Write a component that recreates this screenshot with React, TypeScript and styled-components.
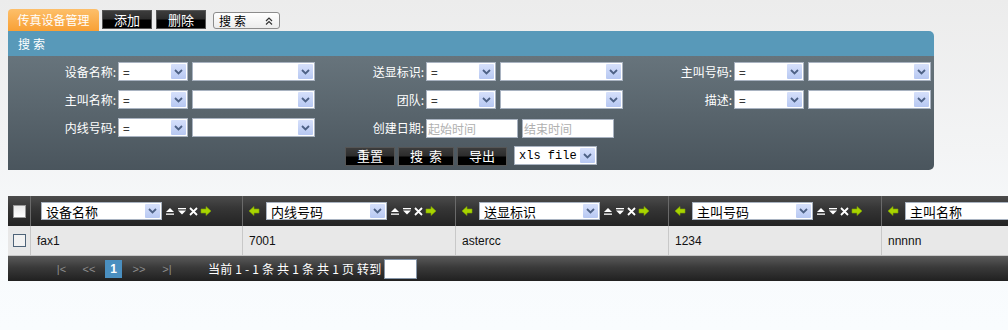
import React from "react";
import styled, { createGlobalStyle } from "styled-components";

const Global = createGlobalStyle`
  html, body { margin: 0; padding: 0; }
  body { font-family: "Liberation Sans", Arial, "Noto Sans CJK SC", sans-serif; font-size: 12px; }
`;

const Page = styled.div`
  width: 1008px;
  height: 330px;
  overflow: hidden;
  background: linear-gradient(#ececec 0px, #f3f4f5 150px, #f8fbfd 260px, #f9fcfe 330px);
  padding-top: 9px;
  box-sizing: border-box;
`;

const TopBar = styled.div`
  display: flex;
  align-items: flex-start;
  margin-left: 8px;
  height: 22px;
`;

const Tab = styled.div`
  width: 91px;
  height: 22px;
  box-sizing: border-box;
  border-radius: 4px 4px 0 0;
  background: linear-gradient(#fdbf6a, #f8a035);
  color: #fff;
  font-family: "Noto Sans CJK SC", sans-serif;
  font-size: 12px;
  line-height: 21px;
  text-align: center;
  margin-right: 3px;
`;

const BlackButton = styled.button<{ $w: number; $spaced?: boolean }>`
  width: ${(p) => p.$w}px;
  height: 19px;
  margin: 1px 0 0;
  padding: 0;
  border: 1px solid #555;
  background: linear-gradient(#3c3c3c 0%, #2c2c2c 48%, #000 52%, #000 100%);
  color: #fff;
  font-family: "Noto Sans CJK SC", sans-serif;
  font-size: 13px;
  line-height: 16px;
  letter-spacing: ${(p) => (p.$spaced ? "6px" : "0")};
  text-indent: ${(p) => (p.$spaced ? "6px" : "0")};
  box-sizing: border-box;
  cursor: pointer;
  flex: none;
`;

const Spacer = styled.div<{ $w: number }>`
  width: ${(p) => p.$w}px;
  flex: none;
`;

const ModeSelect = styled.div`
  margin-top: 3px;
  width: 67px;
  height: 17px;
  box-sizing: border-box;
  border: 1px solid #8c8c8c;
  border-radius: 3px;
  background: linear-gradient(#fff, #ececec);
  display: flex;
  align-items: center;
  justify-content: space-between;
  padding: 0 6px 0 5px;
  font-family: "Noto Sans CJK SC", sans-serif;
  font-size: 12px;
  color: #000;
  letter-spacing: 3px;
`;

const Panel = styled.div`
  margin-left: 8px;
  width: 926px;
  border-radius: 0 5px 5px 0;
  overflow: hidden;
`;

const PanelHead = styled.div`
  height: 25px;
  background: #5899b9;
  color: #fff;
  font-family: "Noto Sans CJK SC", sans-serif;
  font-size: 12px;
  line-height: 25px;
  padding-left: 10px;
  letter-spacing: 3px;
`;

const PanelBody = styled.div`
  background: linear-gradient(#67747c, #4a555d);
  padding: 6px 0 6px;
  height: 114px;
  box-sizing: border-box;
  display: flex;
  flex-direction: column;
  gap: 9px;
`;

const FilterRow = styled.div`
  display: flex;
  height: 19px;
`;

const Group = styled.div`
  width: 308px;
  flex: none;
  display: flex;
  align-items: center;
`;

const Label = styled.div`
  width: 108px;
  flex: none;
  margin-right: 2px;
  text-align: right;
  color: #fff;
  font-family: "Noto Sans CJK SC", sans-serif;
  font-size: 12px;
  white-space: nowrap;
`;

const FakeSelect = styled.div<{ $w: number; $h?: number; $mono?: boolean; $size?: number; $gap?: number }>`
  width: ${(p) => p.$w}px;
  height: ${(p) => p.$h ?? 19}px;
  box-sizing: border-box;
  border: 1px solid #a9b3c1;
  background: #fff;
  display: flex;
  align-items: stretch;
  margin-right: ${(p) => p.$gap ?? 4}px;
  font-family: ${(p) =>
    p.$mono ? '"Liberation Mono", "DejaVu Sans Mono", monospace' : '"Noto Sans CJK SC", sans-serif'};
  font-size: ${(p) => p.$size ?? 12}px;
  color: #000;
  flex: none;
`;

const SelectValue = styled.div`
  flex: 1;
  padding-left: 4px;
  display: flex;
  align-items: center;
  overflow: hidden;
  white-space: nowrap;
`;

const DropBtn = styled.div`
  width: 15px;
  flex: none;
  margin: 1px;
  background: linear-gradient(#d6e0fb, #b7c8f2);
  border-radius: 1px;
  display: flex;
  align-items: center;
  justify-content: center;
`;

const DateInput = styled.div`
  width: 92px;
  height: 19px;
  flex: none;
  box-sizing: border-box;
  border: 1px solid #a9b3c1;
  background: #fff;
  color: #b0b0b0;
  font-family: "Noto Sans CJK SC", sans-serif;
  font-size: 12px;
  line-height: 17px;
  padding-left: 1px;
  margin-right: 4px;
  margin-top: 1px;
`;

const ActionRow = styled.div`
  display: flex;
  align-items: center;
  padding-left: 337px;
  gap: 3px;
  height: 19px;
`;

const TableWrap = styled.div`
  margin: 26px 0 0 8px;
  width: 1000px;
  overflow: hidden;
`;

const Row = styled.div`
  display: flex;
  width: 1120px;
`;

const HeadRow = styled(Row)`
  height: 30px;
  background: linear-gradient(#4c4c4c 0%, #363636 40%, #232323 100%);
`;

const DataRow = styled(Row)`
  height: 29px;
  background: #e8e8e8;
  border-bottom: 1px solid #c8c8c8;
`;

const CheckCell = styled.div<{ $head?: boolean }>`
  width: 22px;
  flex: none;
  border-right: 1px solid ${(p) => (p.$head ? "#6a6a6a" : "#c8c8c8")};
  display: flex;
  align-items: center;
  justify-content: center;
`;

const CheckBox = styled.div<{ $head?: boolean }>`
  width: 11px;
  height: 11px;
  border: 1px solid ${(p) => (p.$head ? "#999" : "#4e6378")};
  background: ${(p) => (p.$head ? "linear-gradient(#e8e8e8,#fff)" : "#f2f2f2")};
  margin-left: 1px;
`;

const HeadCell = styled.div<{ $first?: boolean }>`
  width: ${(p) => (p.$first ? 212 : 213)}px;
  flex: none;
  border-right: 1px solid #6a6a6a;
  display: flex;
  align-items: center;
  padding-left: ${(p) => (p.$first ? 10 : 5)}px;
  box-sizing: border-box;
`;

const DataCell = styled.div<{ $first?: boolean }>`
  width: ${(p) => (p.$first ? 212 : 213)}px;
  flex: none;
  border-right: 1px solid #c8c8c8;
  padding-left: 6px;
  box-sizing: border-box;
  display: flex;
  align-items: center;
  font-family: "Liberation Sans", Arial, sans-serif;
  font-size: 12px;
  color: #111;
`;

const IconSet = styled.div`
  display: flex;
  align-items: center;
  gap: 2px;
  margin-left: -1px;
`;

const ArrowLeft = styled.div`
  margin-right: 6px;
  display: flex;
`;

const Pager = styled.div`
  height: 25px;
  width: 1000px;
  background: linear-gradient(#5b5b5b 0%, #3a3a3a 45%, #202020 100%);
  display: flex;
  align-items: center;
  color: #fff;
  font-family: "Liberation Sans", Arial, "Noto Sans CJK SC", sans-serif;
  font-size: 12px;
`;

const PageNav = styled.span<{ $w: number }>`
  width: ${(p) => p.$w}px;
  color: #8d8d8d;
  font-size: 11px;
  text-align: center;
  flex: none;
`;

const PageCurrent = styled.span`
  width: 17px;
  height: 18px;
  background: #4a8fc0;
  color: #fff;
  font-weight: bold;
  text-align: center;
  line-height: 18px;
  font-size: 12px;
  flex: none;
`;

const PageInfo = styled.span`
  margin-left: 32px;
  font-family: "Noto Sans CJK SC", sans-serif;
  font-size: 12px;
  letter-spacing: 0.2px;
  white-space: pre;
`;

const JumpInput = styled.div`
  width: 33px;
  height: 20px;
  box-sizing: border-box;
  background: #fff;
  border: 1px solid #8595a8;
  margin-left: 3px;
`;

const Chevron = () => (
  <svg width="9" height="6" viewBox="0 0 9 6">
    <path d="M1 1 L4.5 4.5 L8 1" fill="none" stroke="#4d6185" strokeWidth="1.8" />
  </svg>
);

const DoubleUp = () => (
  <svg width="8" height="8" viewBox="0 0 8 8">
    <path d="M1 4 L4 1 L7 4 M1 7.5 L4 4.5 L7 7.5" fill="none" stroke="#333" strokeWidth="1.2" />
  </svg>
);

const SortUp = () => (
  <svg width="10" height="9" viewBox="0 0 10 9">
    <path d="M1 5 L5 1 L9 5 Z" fill="#fff" />
    <rect x="1" y="6.5" width="8" height="1.3" fill="#fff" />
  </svg>
);

const SortDown = () => (
  <svg width="10" height="9" viewBox="0 0 10 9">
    <rect x="1" y="1" width="8" height="1.3" fill="#fff" />
    <path d="M1 3.5 L9 3.5 L5 7.5 Z" fill="#fff" />
  </svg>
);

const Cross = () => (
  <svg width="9" height="9" viewBox="0 0 9 9">
    <path d="M1 1 L8 8 M8 1 L1 8" stroke="#fff" strokeWidth="1.8" />
  </svg>
);

const GreenArrow = ({ dir }: { dir: "left" | "right" }) => (
  <svg
    width="12"
    height="10"
    viewBox="0 0 12 10"
    style={dir === "left" ? { transform: "scaleX(-1)" } : undefined}
  >
    <path d="M1 3 H6 V0.5 L11 5 L6 9.5 V7 H1 Z" fill="#a8d400" stroke="#7fa600" strokeWidth="0.6" />
  </svg>
);

const Select = ({
  w,
  value,
  h,
  mono,
  size,
  gap,
}: {
  w: number;
  value?: string;
  h?: number;
  mono?: boolean;
  size?: number;
  gap?: number;
}) => (
  <FakeSelect $w={w} $h={h} $mono={mono} $size={size} $gap={gap}>
    <SelectValue>{value}</SelectValue>
    <DropBtn>
      <Chevron />
    </DropBtn>
  </FakeSelect>
);

const FilterGroup = ({ label }: { label: string }) => (
  <Group>
    <Label>{label}</Label>
    <Select w={70} value="=" />
    <Select w={123} gap={0} />
  </Group>
);

const columns = ["设备名称", "内线号码", "送显标识", "主叫号码", "主叫名称"];
const values = ["fax1", "7001", "astercc", "1234", "nnnnn"];

export default function App() {
  return (
    <>
      <Global />
      <Page>
        <TopBar>
          <Tab>传真设备管理</Tab>
          <BlackButton $w={50}>添加</BlackButton>
          <Spacer $w={4} />
          <BlackButton $w={50}>删除</BlackButton>
          <Spacer $w={7} />
          <ModeSelect>
            <span>搜索</span>
            <DoubleUp />
          </ModeSelect>
        </TopBar>
        <Panel>
          <PanelHead>搜索</PanelHead>
          <PanelBody>
            <FilterRow>
              <FilterGroup label="设备名称:" />
              <FilterGroup label="送显标识:" />
              <FilterGroup label="主叫号码:" />
            </FilterRow>
            <FilterRow>
              <FilterGroup label="主叫名称:" />
              <FilterGroup label="团队:" />
              <FilterGroup label="描述:" />
            </FilterRow>
            <FilterRow>
              <FilterGroup label="内线号码:" />
              <Group>
                <Label>创建日期:</Label>
                <DateInput>起始时间</DateInput>
                <DateInput>结束时间</DateInput>
              </Group>
            </FilterRow>
            <ActionRow>
              <BlackButton $w={50}>重置</BlackButton>
              <BlackButton $w={56} $spaced>搜索</BlackButton>
              <BlackButton $w={50}>导出</BlackButton>
              <Spacer $w={1} />
              <Select w={83} value="xls file" mono size={12} />
            </ActionRow>
          </PanelBody>
        </Panel>
        <TableWrap>
          <HeadRow>
            <CheckCell $head>
              <CheckBox $head />
            </CheckCell>
            {columns.map((c, i) => (
              <HeadCell key={c} $first={i === 0}>
                {i > 0 && (
                  <ArrowLeft>
                    <GreenArrow dir="left" />
                  </ArrowLeft>
                )}
                <Select w={121} h={18} value={c} size={13} />
                <IconSet>
                  <SortUp />
                  <SortDown />
                  <Cross />
                  <GreenArrow dir="right" />
                </IconSet>
              </HeadCell>
            ))}
          </HeadRow>
          <DataRow>
            <CheckCell>
              <CheckBox />
            </CheckCell>
            {values.map((v, i) => (
              <DataCell key={v} $first={i === 0}>
                {v}
              </DataCell>
            ))}
          </DataRow>
          <Pager>
            <Spacer $w={45} />
            <PageNav $w={17}>|&lt;</PageNav>
            <Spacer $w={8} />
            <PageNav $w={22}>&lt;&lt;</PageNav>
            <Spacer $w={5} />
            <PageCurrent>1</PageCurrent>
            <Spacer $w={6} />
            <PageNav $w={22}>&gt;&gt;</PageNav>
            <Spacer $w={8} />
            <PageNav $w={18}>&gt;|</PageNav>
            <PageInfo>当前 1 - 1 条 共 1 条 共 1 页 转到</PageInfo>
            <JumpInput />
          </Pager>
        </TableWrap>
      </Page>
    </>
  );
}
